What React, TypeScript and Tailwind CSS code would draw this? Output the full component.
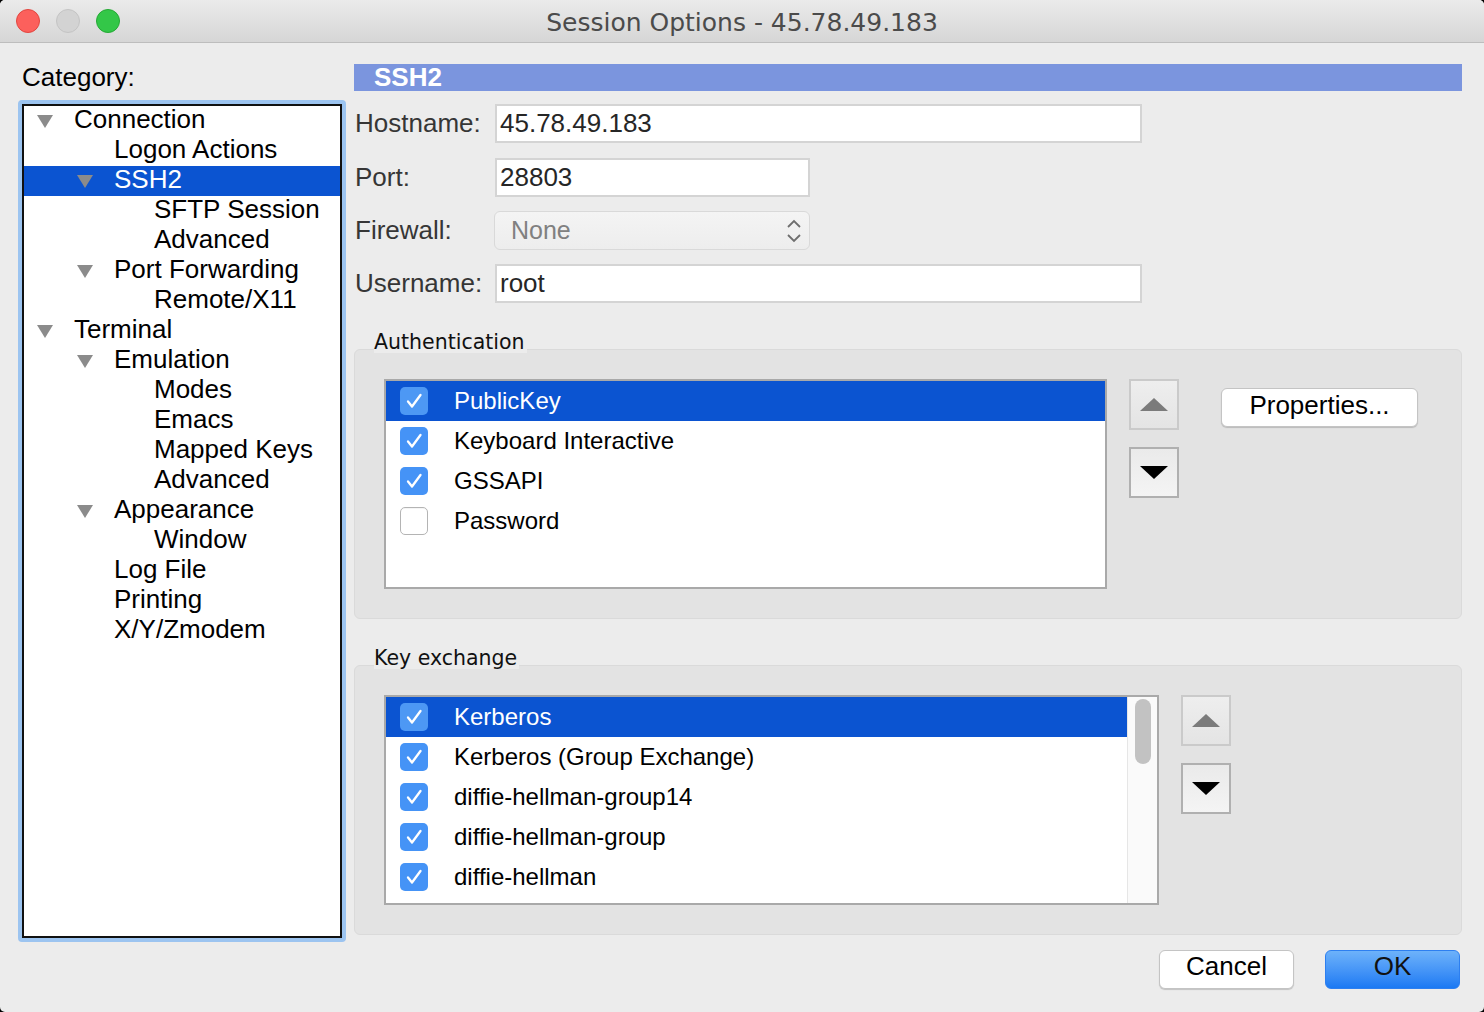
import React from "react";

type TreeItem = {
  label: string;
  level: number;
  expanded?: boolean;
  selected?: boolean;
};

const tree: TreeItem[] = [
  { label: "Connection", level: 0, expanded: true },
  { label: "Logon Actions", level: 1 },
  { label: "SSH2", level: 1, expanded: true, selected: true },
  { label: "SFTP Session", level: 2 },
  { label: "Advanced", level: 2 },
  { label: "Port Forwarding", level: 1, expanded: true },
  { label: "Remote/X11", level: 2 },
  { label: "Terminal", level: 0, expanded: true },
  { label: "Emulation", level: 1, expanded: true },
  { label: "Modes", level: 2 },
  { label: "Emacs", level: 2 },
  { label: "Mapped Keys", level: 2 },
  { label: "Advanced", level: 2 },
  { label: "Appearance", level: 1, expanded: true },
  { label: "Window", level: 2 },
  { label: "Log File", level: 1 },
  { label: "Printing", level: 1 },
  { label: "X/Y/Zmodem", level: 1 },
];

// indent per level, written out so tailwind picks them up
const indent = ["pl-[13px]", "pl-[53px]", "pl-[93px]"];

const authMethods = [
  { label: "PublicKey", checked: true },
  { label: "Keyboard Interactive", checked: true },
  { label: "GSSAPI", checked: true },
  { label: "Password", checked: false },
];

const kexMethods = [
  "Kerberos",
  "Kerberos (Group Exchange)",
  "diffie-hellman-group14",
  "diffie-hellman-group",
  "diffie-hellman",
];

function Disclosure() {
  return (
    <svg width="16" height="13" viewBox="0 0 16 13">
      <polygon points="0,0 16,0 8,13" fill="#8b8b8b" />
    </svg>
  );
}

function Checkbox({ checked, active }: { checked: boolean; active?: boolean }) {
  if (!checked) {
    return (
      <div className="h-[28px] w-[28px] shrink-0 rounded-[5px] border border-[#b4b4b4] bg-white shadow-[inset_0_1px_0_rgba(0,0,0,0.04)]" />
    );
  }
  return (
    <div
      className={
        active
          ? "flex h-[28px] w-[28px] shrink-0 items-center justify-center rounded-[5px] bg-[#4d98f4]"
          : "flex h-[28px] w-[28px] shrink-0 items-center justify-center rounded-[5px] bg-[#4593f6]"
      }
    >
      <svg width="28" height="28" viewBox="0 0 28 28">
        <path
          d="M8 14.5 L12 19.5 L20.5 8"
          fill="none"
          stroke="white"
          strokeWidth="2.3"
          strokeLinecap="round"
          strokeLinejoin="round"
        />
      </svg>
    </div>
  );
}

function ArrowButton({ dir }: { dir: "up" | "down" }) {
  const up = dir === "up";
  return (
    <button
      type="button"
      className={
        up
          ? "flex h-[51px] w-[50px] items-center justify-center border-2 border-[#cacaca] bg-gradient-to-b from-[#eeeeee] to-[#e4e4e4]"
          : "flex h-[51px] w-[50px] items-center justify-center border-2 border-[#b0b0b0] bg-gradient-to-b from-[#eaeaea] to-[#f4f4f4]"
      }
    >
      <svg width="28" height="13" viewBox="0 0 28 13">
        {up ? (
          <polygon points="0,13 28,13 14,0" fill="#7b7b7b" />
        ) : (
          <polygon points="0,0 28,0 14,13" fill="#000000" />
        )}
      </svg>
    </button>
  );
}

function Field({ label, value, wide }: { label: string; value: string; wide?: boolean }) {
  return (
    <div className="flex h-[39px] items-center">
      <div className="w-[141px] pl-[1px] text-[26px] text-[#363636]">{label}</div>
      <div
        className={
          (wide ? "w-[647px]" : "w-[315px]") +
          " flex h-[39px] items-center border-2 border-[#d4d4d4] bg-white pl-[3px] text-[26px] text-[#262626]"
        }
      >
        {value}
      </div>
    </div>
  );
}

function GroupLabel({ children }: { children: React.ReactNode }) {
  return (
    <div className="relative z-10 h-[26px]">
      <span className="ml-[20px] inline-block h-[26px] bg-[#ececec] pr-[2px] pt-[2px] font-['DejaVu_Sans',sans-serif] text-[20.5px] leading-[26px] text-[#111]">
        {children}
      </span>
    </div>
  );
}

export default function App() {
  return (
    <div className="h-[1012px] w-[1484px] bg-black font-['Liberation_Sans',Arial,sans-serif]">
      <div className="flex h-full w-full flex-col overflow-hidden rounded-[5px] bg-[#ececec]">
        {/* title bar */}
        <div className="relative flex h-[43px] shrink-0 items-center border-b border-[#bdbdbd] bg-gradient-to-b from-[#ebebeb] to-[#d6d6d6]">
          <div className="flex gap-[16px] pl-[16px]">
            <div className="h-[24px] w-[24px] rounded-full border border-[#e2463f] bg-[#fc605c]" />
            <div className="h-[24px] w-[24px] rounded-full border border-[#c4c4c4] bg-[#d3d3d3]" />
            <div className="h-[24px] w-[24px] rounded-full border border-[#25a935] bg-[#33c748]" />
          </div>
          <div className="absolute inset-x-0 top-0 flex h-[43px] items-center justify-center pt-[2px] font-['DejaVu_Sans',sans-serif] text-[25px] text-[#4b4b4b]">
            Session Options - 45.78.49.183
          </div>
        </div>

        <div className="flex flex-1">
          {/* category */}
          <div className="w-[354px] shrink-0 pl-[18px]">
            <div className="mt-[19px] h-[30px] pl-[4px] text-[26px] leading-[30px] text-black">Category:</div>
            <div className="mt-[8px] h-[842px] w-[328px] rounded-[4px] border-[4px] border-[#9cc4f0]">
              <div className="h-full w-full border-2 border-[#111] bg-white">
                {tree.map((it, i) => (
                  <div
                    key={i}
                    className={
                      (it.selected ? "bg-[#0b54d1] text-white " : "text-black ") +
                      indent[it.level] +
                      " flex h-[30px] items-center text-[26px]"
                    }
                  >
                    <div className="flex w-[37px] shrink-0 items-center">{it.expanded && <Disclosure />}</div>
                    <span className="pb-[4px] leading-[30px]">{it.label}</span>
                  </div>
                ))}
              </div>
            </div>
          </div>

          {/* SSH2 panel */}
          <div className="w-[1108px] pt-[21px]">
            <div className="flex h-[27px] items-center bg-[#7b95de] pl-[20px] text-[26px] font-bold leading-[27px] text-white">
              SSH2
            </div>

            <div className="mt-[13px] flex flex-col gap-[15px]">
              <Field label="Hostname:" value="45.78.49.183" wide />
              <Field label="Port:" value="28803" />
            </div>
            <div className="mt-[14px] flex h-[39px] items-center">
              <div className="w-[140px] pl-[1px] text-[26px] text-[#363636]">Firewall:</div>
              <div className="flex h-[39px] w-[316px] items-center justify-between rounded-[6px] border border-[#d9d9d9] bg-gradient-to-b from-[#f4f4f4] to-[#ededed] pl-[16px] pr-[6px] text-[25px] text-[#808080]">
                <span>None</span>
                <svg width="18" height="26" viewBox="0 0 18 26">
                  <path d="M3 9 L9 3 L15 9" fill="none" stroke="#6e6e6e" strokeWidth="1.8" />
                  <path d="M3 17 L9 23 L15 17" fill="none" stroke="#6e6e6e" strokeWidth="1.8" />
                </svg>
              </div>
            </div>
            <div className="mt-[14px]">
              <Field label="Username:" value="root" wide />
            </div>

            {/* Authentication */}
            <div className="mt-[24px]">
              <GroupLabel>Authentication</GroupLabel>
              <div className="-mt-[4px] flex h-[270px] rounded-[6px] border border-[#dadada] bg-[#e3e3e3] pl-[29px] pt-[29px]">
                <div className="h-[210px] w-[723px] border-2 border-[#a9a9a9] bg-white">
                  {authMethods.map((m, i) => (
                    <div
                      key={m.label}
                      className={
                        (i === 0 ? "bg-[#0b54d1] text-white" : "text-black") +
                        " flex h-[40px] items-center pl-[14px] text-[24px]"
                      }
                    >
                      <Checkbox checked={m.checked} active={i === 0} />
                      <span className="ml-[26px]">{m.label}</span>
                    </div>
                  ))}
                </div>
                <div className="ml-[22px] flex flex-col gap-[17px]">
                  <ArrowButton dir="up" />
                  <ArrowButton dir="down" />
                </div>
                <div className="ml-[42px] pt-[9px]">
                  <button
                    type="button"
                    className="flex h-[39px] w-[197px] items-start justify-center rounded-[6px] border border-[#c4c4c4] bg-white text-[26px] leading-[32px] text-black shadow-[0_1px_1px_rgba(0,0,0,0.18)]"
                  >
                    <span>Properties...</span>
                  </button>
                </div>
              </div>
            </div>

            {/* Key exchange */}
            <div className="mt-[24px]">
              <GroupLabel>Key exchange</GroupLabel>
              <div className="-mt-[4px] flex h-[270px] rounded-[6px] border border-[#dadada] bg-[#e3e3e3] pl-[29px] pt-[29px]">
                <div className="flex h-[210px] w-[775px] border-2 border-[#a9a9a9] bg-white">
                  <div className="flex-1">
                    {kexMethods.map((m, i) => (
                      <div
                        key={m}
                        className={
                          (i === 0 ? "bg-[#0b54d1] text-white" : "text-black") +
                          " flex h-[40px] items-center pl-[14px] text-[24px]"
                        }
                      >
                        <Checkbox checked active={i === 0} />
                        <span className="ml-[26px]">{m}</span>
                      </div>
                    ))}
                  </div>
                  <div className="w-[30px] shrink-0 border-l border-[#e6e6e6] bg-[#fafafa] pl-[7px] pt-[2px]">
                    <div className="h-[65px] w-[16px] rounded-full bg-[#c2c2c2]" />
                  </div>
                </div>
                <div className="ml-[22px] flex flex-col gap-[17px]">
                  <ArrowButton dir="up" />
                  <ArrowButton dir="down" />
                </div>
              </div>
            </div>

            <div className="mt-[15px] flex justify-end gap-[31px] pr-[2px]">
              <button
                type="button"
                className="flex h-[39px] w-[135px] items-start justify-center rounded-[6px] border border-[#c4c4c4] bg-white text-[26px] leading-[31px] text-black shadow-[0_1px_1px_rgba(0,0,0,0.18)]"
              >
                <span>Cancel</span>
              </button>
              <button
                type="button"
                className="flex h-[39px] w-[135px] items-start justify-center rounded-[6px] border border-[#2d7ff0] bg-gradient-to-b from-[#6db2fa] to-[#1a79f3] text-[26px] leading-[31px] text-[#111]"
              >
                <span>OK</span>
              </button>
            </div>
          </div>
        </div>
      </div>
    </div>
  );
}
